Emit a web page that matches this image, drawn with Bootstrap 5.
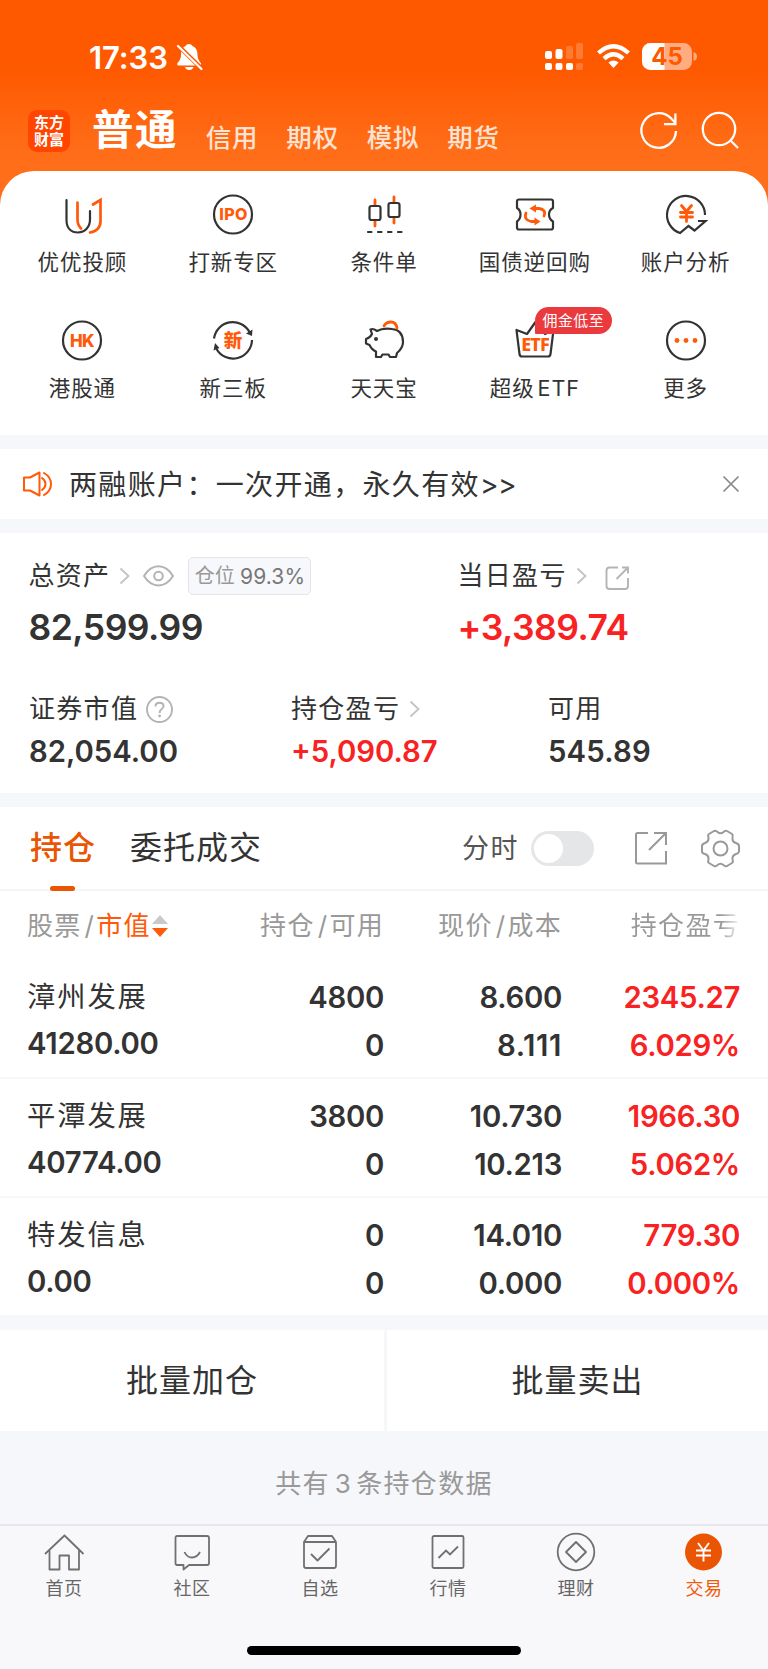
<!DOCTYPE html>
<html lang="zh-CN">
<head>
<meta charset="utf-8">
<meta name="viewport" content="width=device-width, initial-scale=1">
<title>交易</title>
<link rel="stylesheet" href="https://cdn.jsdelivr.net/npm/bootstrap@5.3.0/dist/css/bootstrap.min.css">
<style>
body{font-family:Inter,"Noto Sans CJK SC",sans-serif;color:#333;background:#f6f7fa;line-height:1;overflow-x:hidden}
svg{display:block;flex:none;overflow:visible}
.app{width:768px;height:1669px;white-space:nowrap}
.top-area{height:205px;background:linear-gradient(#ff5900 0,#ff5900 70px,#ff6d18 150px,#ff6f1b 205px);color:#fff}
.status{height:74px;padding:41px 71px 0 89px}
.clock{font-size:31px;font-weight:600;line-height:33px;letter-spacing:-.1px}
.accounts{height:97px;padding:0 29px 0 28px}
.logo{width:42px;height:42px;border-radius:9px;background:#ff4500;font:700 15px/17px Inter,"Noto Sans CJK SC",sans-serif;padding-top:4px;text-align:center;margin-top:36px}
.acc-main{font-size:41.5px;font-weight:700;letter-spacing:1.4px;line-height:42px;margin:35px 0 0 22px}
.acc{font-size:25.5px;font-weight:500;letter-spacing:.7px;line-height:30px;width:80.5px;margin-top:49px;color:#ffe2d2}
.panel{margin-top:-34px;height:264px;border-radius:34px 34px 0 0;padding:23px 7px 0;background:#fff}
.tool{height:126px;width:20%;font-size:21.5px;letter-spacing:.9px}
.tool span.cap{line-height:28px;margin-top:14px}
.etf-tip{left:20px;top:-13px;width:77px;height:27px;border-radius:14px 14px 14px 1px;background:#eb3a3e;color:#fff;font-size:15px;letter-spacing:.4px;line-height:27px;text-align:center}
.gapbar{height:14px}
.notice{height:70px;font-size:28px;letter-spacing:1.35px;padding:0 28px 0 22px}
.assets{height:260px}
.lbl{font-size:26px;letter-spacing:1.3px;height:38px}
.big{font-size:35.5px;font-weight:600;line-height:40px;letter-spacing:-.5px;margin-top:13px}
.num{font-size:29.3px;font-weight:600;line-height:32px}
.pos{border:1px solid #e3e4e8;border-radius:5px;background:#f7f8fb;width:123px;height:38px;font-size:20px;color:#999;letter-spacing:.2px}
.pos b{font-weight:400;color:#777;font-size:21px;letter-spacing:.1px}
.red{color:#f82222}
.tabs-row{height:84px;border-bottom:2px solid #f5f6f8;font-size:32px;letter-spacing:1px;padding:0 28px 0 30px}
.tab-on{color:#ea5504;font-weight:500}
.tab-on i{left:20px;bottom:-27px;width:25px;height:5px;border-radius:2.5px;background:#ea5504}
.switch-x{width:63px;height:35px;border-radius:18px;background:#e5e6e8;padding:3px}
.switch-x i{width:29px;height:29px;border-radius:50%;background:#fff}
.cols{display:grid;grid-template-columns:207px 177px 178px 178px}
.cols>:first-child{padding-left:27px}
.cols>*{text-align:right}.cols>:first-child{text-align:left}
.thead-x{height:69px;font-size:26px;letter-spacing:1.3px;color:#999;line-height:69px}
.sl{margin:0 1px 0 3px}
.fade-x{background:linear-gradient(90deg,#999 82%,#fff 102%);-webkit-background-clip:text;background-clip:text;color:transparent}
.hold{height:119px;border-bottom:2px solid #f6f7f9;padding-top:18px}
.hold.last{border:0;height:117px}
.stock{font-size:28.3px;letter-spacing:1.9px;line-height:38px}
.hold .num{line-height:40px;letter-spacing:-.3px}.hold .n2{margin-top:8px}
.hold>:first-child .n2{letter-spacing:-.25px}
.batch{height:101px;font-size:32px;letter-spacing:1px}
.batch>div+div{border-left:3px solid #f6f7f9}
.total{height:93px;font-size:26px;letter-spacing:1.3px;color:#999;padding-top:12px}
.bottom{height:145px;background:#f8f8fb;border-top:2px solid #e7e7ed;padding-top:7px}
.bottom .item{width:128px;font-size:18px;letter-spacing:.6px;color:#666}
.bottom .item span{line-height:24px;margin-top:4px}
.homebar{width:274px;height:9px;border-radius:5px;background:#000;margin-top:45px}
</style>
</head>
<body>
<div class="app d-flex flex-column">
  <header class="top-area flex-shrink-0">
    <div class="status d-flex align-items-start">
      <span class="clock">17:33</span>
      <svg class="ms-2" width="27" height="30" viewBox="0 0 27 30" style="margin-top:1px"><path fill="#fff" d="M2.500 23.500Q.500 23 1.500 21Q5 17.500 5 13Q5 5.500 9.500 4Q10.500 2 13 2T16.500 4Q21.500 6 21.500 13Q21.500 17.500 25 21.500Q25.500 23.500 24 23.500ZM9 25H17.500Q16.500 28 13.200 28T9 25Z"/><path stroke="#ff5900" stroke-width="4.500" d="M1 2.500L26 27"/><path stroke="#fff" stroke-width="2.200" stroke-linecap="round" d="M2 4L25.500 27"/></svg>
      <div class="ms-auto d-flex align-items-center" style="padding-top:2px">
        <svg width="39" height="27" viewBox="0 0 39 27" fill="#fff"><rect y="8" width="7" height="8" rx="2"/><rect x="10.500" y="6" width="7" height="10" rx="2"/><rect y="20" width="7" height="7" rx="2"/><rect x="10.500" y="20" width="7" height="7" rx="2"/><rect x="21" y="20" width="7" height="7" rx="2"/><g opacity=".2"><rect x="21" y="3" width="7" height="13" rx="2"/><rect x="31" width="7" height="16" rx="2"/><rect x="31" y="20" width="7" height="7" rx="2"/></g></svg>
        <svg style="margin-left:13px" width="33" height="25" viewBox="0 0 33 25" fill="none" stroke="#fff" stroke-width="4.300"><path d="M1.500 9Q16.500-4.500 31.500 9"/><path d="M7 14.600Q16.500 6 26 14.600"/><path d="M11.400 18.600Q16.500 14.200 21.600 18.600L16.500 24Z" fill="#fff" stroke="none"/></svg>
        <svg style="margin-left:12px" width="55" height="27" viewBox="0 0 55 27"><rect width="50" height="27" rx="8.500" fill="#ffac80"/><path fill="#fff" d="M8.500 0H22.500V27H8.500A8.500 8.500 0 0 1 0 18.500V8.500A8.500 8.500 0 0 1 8.500 0Z"/><path fill="#ffac80" d="M51.500 9Q55 10 55 13.500T51.500 18Z"/><text x="25" y="22" font-size="24" font-weight="700" fill="#ff5900" text-anchor="middle">45</text></svg>
      </div>
    </div>
    <div class="accounts d-flex">
      <div class="logo">东方<br>财富</div>
      <span class="acc-main">普通</span>
      <span class="acc" style="margin-left:28px">信用</span><span class="acc">期权</span><span class="acc">模拟</span><span class="acc">期货</span>
      <svg class="ms-auto" style="margin-top:37px" width="38" height="38" viewBox="0 0 38 38" fill="none" stroke="#fff" stroke-width="2.300"><path d="M36 20A17.300 17.300 0 1 1 31 7.300L35 11.500M35.400 2.500V13.200H24"/></svg>
      <svg style="margin:37px 0 0 23px" width="38" height="38" viewBox="0 0 38 38" fill="none" stroke="#fff" stroke-width="2.300"><circle cx="18" cy="18" r="16.200"/><path d="M29 29L37 37"/></svg>
    </div>
  </header>
  <section class="panel d-flex flex-wrap align-content-start flex-shrink-0 position-relative">
    <div class="tool d-flex flex-column align-items-center">
      <svg width="40" height="40" viewBox="0 0 40 40" fill="none" stroke-width="2.200" stroke-linecap="round"><path stroke="#333" d="M4.500 6V26C4.500 34 9 38.500 16 38.500S28 33 28 25.500V17"/><path stroke="#ff5a0a" stroke-width="2.700" d="M15.500 8.500V25Q15.500 31 19 34.500M31 10.500L38.500 6V27Q38.500 36.500 28 38.500"/></svg><span class="cap">优优投顾</span></div>
    <div class="tool d-flex flex-column align-items-center">
      <svg width="40" height="40" viewBox="0 0 40 40"><circle cx="20" cy="20.500" r="19" fill="none" stroke="#333" stroke-width="2.200"/><text x="20.500" y="26" text-anchor="middle" font-size="16" font-weight="800" letter-spacing=".3" fill="#ff5a0a">IPO</text></svg><span class="cap">打新专区</span></div>
    <div class="tool d-flex flex-column align-items-center">
      <svg width="40" height="40" viewBox="0 0 40 40" fill="none" stroke-width="2.200" stroke-linecap="round"><path stroke="#ff5a0a" stroke-width="2.800" d="M11 6V11M11 27V32M30 3V8M30 24V29"/><rect x="5.500" y="12" width="11" height="14" rx="2" stroke="#333"/><rect x="24.500" y="9" width="11" height="14" rx="2" stroke="#333"/><path stroke="#333" d="M4 38H7.500M14 38H17.500M24 38H27.500M34 38H37.500"/></svg><span class="cap">条件单</span></div>
    <div class="tool d-flex flex-column align-items-center">
      <svg width="40" height="40" viewBox="0 0 40 40" fill="none" stroke="#333" stroke-width="2.200" stroke-linejoin="round"><path d="M4 5.500H36Q38 5.500 38 7.500V14Q34 16 34 20.500T38 27.500V33.500Q38 35.500 36 35.500H4Q2 35.500 2 33.500V27.500Q5.500 25 5.500 20.500T2 14V7.500Q2 5.500 4 5.500Z"/><g stroke="#ff5a0a" stroke-width="2.800" stroke-linecap="round"><path d="M11 19Q8.500 26 16 27.500H21M29 22Q31.500 15.500 24 14.500H18"/></g><path fill="#ff5a0a" stroke="none" d="M14.500 14.500L21 10.500V18.500ZM25.500 27.500L19.500 23.500V31.500Z"/></svg><span class="cap">国债逆回购</span></div>
    <div class="tool d-flex flex-column align-items-center">
      <svg width="40" height="40" viewBox="0 0 40 40" fill="none" stroke="#333" stroke-width="2.200"><path d="M39 21A19 19 0 1 0 14 39L22.500 32L28.500 36.500L39.500 27H32"/><path stroke="#ff5a0a" stroke-width="2.800" stroke-linecap="round" d="M15.500 11.500L20.500 17.500L25.500 11.500M14.500 18.500H26.500M14.500 23H26.500M20.500 18V27.500"/></svg><span class="cap">账户分析</span></div>
    <div class="tool d-flex flex-column align-items-center">
      <svg width="40" height="40" viewBox="0 0 40 40"><circle cx="20" cy="20.500" r="19" fill="none" stroke="#333" stroke-width="2.200"/><text x="20" y="26.500" text-anchor="middle" font-size="17" font-weight="800" fill="#ff5a0a" letter-spacing="-.6">HK</text></svg><span class="cap">港股通</span></div>
    <div class="tool d-flex flex-column align-items-center">
      <svg width="40" height="40" viewBox="0 0 40 40" fill="none" stroke="#333" stroke-width="2.200"><path d="M1 18.500A19 19 0 0 1 36.500 12M39 20A19 19 0 0 1 3.500 29"/><path fill="#333" stroke="none" d="M33 13.500L39.500 9.500L39 16ZM.500 30.500L2 23L6.500 28Z"/><text x="20" y="27" text-anchor="middle" font-size="18.500" font-weight="900" fill="#ff5a0a" stroke="none" letter-spacing="0">新</text></svg><span class="cap">新三板</span></div>
    <div class="tool d-flex flex-column align-items-center">
      <svg width="40" height="40" viewBox="0 0 40 40" fill="none" stroke="#333" stroke-width="2.200" stroke-linejoin="round"><path d="M13 11Q9 8 6.500 9.500L8 14Q6 18 2 19V23.500L5.500 25Q8 30 12 31.500V37H17L18.500 34.500H24.500L26 37H32L33 33Q39 28 39 22Q39 10 28 9Q19 7.500 13 11Z"/><circle cx="12" cy="19" r="2" fill="#333" stroke="none"/><path stroke="#ff5a0a" stroke-width="2.800" stroke-linecap="round" d="M20 6Q22 2 27 2T33 8"/></svg><span class="cap">天天宝</span></div>
    <div class="tool d-flex flex-column align-items-center">
      <div class="position-relative"><svg width="40" height="40" viewBox="0 0 40 40" fill="none" stroke="#333" stroke-width="2.200" stroke-linejoin="round"><path d="M1.500 10L4.500 34Q4.800 36.500 7 36.500H33Q35.200 36.500 35.500 34L38.500 10L30 14L20.500 2L12 14Z"/><text x="20" y="30.500" text-anchor="middle" font-size="18" font-weight="800" fill="#ff5a0a" stroke="none" font-family="Noto Sans" letter-spacing="-.9">ETF</text></svg><span class="etf-tip position-absolute">佣金低至</span></div><span class="cap">超级<span style="margin-left:3px">ETF</span></span></div>
    <div class="tool d-flex flex-column align-items-center">
      <svg width="40" height="40" viewBox="0 0 40 40"><circle cx="20" cy="20.500" r="19" fill="none" stroke="#333" stroke-width="2.200"/><g fill="#ff5a0a"><circle cx="11" cy="20.500" r="2.400"/><circle cx="20" cy="20.500" r="2.400"/><circle cx="29" cy="20.500" r="2.400"/></g></svg><span class="cap">更多</span></div>
  </section>
  <div class="gapbar flex-shrink-0"></div>
  <div class="notice bg-white d-flex align-items-center flex-shrink-0">
    <svg width="31" height="28" viewBox="0 0 31 28" fill="none" stroke="#ff5a0a" stroke-width="2" stroke-linejoin="round"><path d="M2 7.500H8L17.500 2.500V25.500L8 20.500H2Z"/><path stroke-linecap="round" d="M20 8Q23.500 10.500 23.500 14T20 20M22 3Q29 7 29 14T22 25"/></svg>
    <span style="margin-left:16px;line-height:36px;padding-top:2px">两融账户：一次开通，永久有效<span style="letter-spacing:-.5px">&gt;&gt;</span></span>
    <svg class="ms-auto" width="18" height="18" viewBox="0 0 18 18" stroke="#888" stroke-width="1.700"><path d="M1.500 1.500L16.500 16.500M16.500 1.500L1.500 16.500"/></svg>
  </div>
  <div class="gapbar flex-shrink-0"></div>
  <section class="assets bg-white flex-shrink-0">
    <div class="d-flex" style="padding:24px 0 0 28.500px">
      <div style="width:429px">
        <div class="lbl d-flex align-items-center">总资产
          <svg style="margin-left:9px" width="12" height="18" viewBox="0 0 12 18" fill="none" stroke="#c4c4c6" stroke-width="1.900"><path d="M1.500 1.500L9.500 9L1.500 16.500"/></svg>
          <svg style="margin-left:12px" width="31" height="22" viewBox="0 0 31 22" fill="none" stroke="#b3b4b6" stroke-width="2"><path d="M1 11Q7 1.300 15.500 1.300T30 11Q24 20.500 15.500 20.500T1 11Z"/><circle cx="15.500" cy="11" r="4.300"/></svg>
          <span class="pos d-flex align-items-center justify-content-center" style="margin-left:14px;gap:5px">仓位<b>99.3%</b></span></div>
        <div class="big">82,599.99</div>
      </div>
      <div>
        <div class="lbl d-flex align-items-center">当日盈亏
          <svg style="margin-left:9px" width="12" height="18" viewBox="0 0 12 18" fill="none" stroke="#c4c4c6" stroke-width="1.900"><path d="M1.500 1.500L9.500 9L1.500 16.500"/></svg>
          <svg style="margin-left:17px;margin-top:3px" width="24" height="24" viewBox="0 0 24 24" fill="none" stroke="#b3b4b6" stroke-width="1.900"><path d="M13 1.500H4.500Q1.500 1.500 1.500 4.500V20Q1.500 23 4.500 23H20Q23 23 23 20V12M17 1.500H23V7.500M23 1.500L11.500 13"/></svg></div>
        <div class="big red">+3,389.74</div>
      </div>
    </div>
    <div class="d-flex" style="padding:42px 0 0 29px">
      <div style="width:262px"><div class="lbl d-flex align-items-center">证券市值<svg style="margin-left:8px" width="27" height="27" viewBox="0 0 27 27"><circle cx="13.500" cy="13.500" r="12.500" fill="none" stroke="#b3b4b6" stroke-width="1.900"/><path d="M9.500 10.500Q9.500 6.800 13.500 6.800T17.500 10.200Q17.500 12 15.500 13.300T13.600 17" fill="none" stroke="#b3b4b6" stroke-width="1.900"/><circle cx="13.600" cy="20" r="1.400" fill="#b3b4b6"/></svg></div><div class="num" style="margin-top:8px">82,054.00</div></div>
      <div style="width:257px"><div class="lbl d-flex align-items-center">持仓盈亏<svg style="margin-left:9px" width="12" height="18" viewBox="0 0 12 18" fill="none" stroke="#c4c4c6" stroke-width="1.900"><path d="M1.500 1.500L9.500 9L1.500 16.500"/></svg></div><div class="num red" style="margin-top:8px">+5,090.87</div></div>
      <div><div class="lbl d-flex align-items-center">可用</div><div class="num" style="margin-top:8px;letter-spacing:.2px">545.89</div></div>
    </div>
  </section>
  <div class="gapbar flex-shrink-0"></div>
  <section class="bg-white flex-shrink-0">
    <div class="tabs-row d-flex align-items-center">
      <span class="tab-on position-relative">持仓<i class="position-absolute"></i></span>
      <span style="margin-left:34px">委托成交</span>
      <span class="ms-auto" style="font-size:27px;letter-spacing:1.500px;color:#555">分时</span>
      <span class="switch-x" style="margin-left:12px"><i class="d-block"></i></span>
      <svg style="margin-left:40px" width="34" height="34" viewBox="0 0 34 34" fill="none" stroke="#999" stroke-width="2"><path d="M14 2H3.500Q2 2 2 3.500V31Q2 32.500 3.500 32.500H32V20M20 2H32V14M32 2L15 19"/></svg>
      <svg style="margin-left:33px" width="39" height="39" viewBox="0 0 39 39" fill="none" stroke="#999" stroke-width="2" stroke-linejoin="round"><path d="M13 2Q15 1 16.500 3Q19.500 5.500 22.500 3Q24.500 1 26 2L31 5Q32.500 6.500 31.500 8.500Q31 13 35 14Q38 15 38 17V22.500Q37.500 24.500 35 25Q31 26.500 31.500 30.500Q32.500 33 31 34L26 37Q24 38 22.500 36Q19.500 33.500 16.500 36Q15 38 13 37L8 34Q6.500 33 7.500 30.500Q8 26.500 4 25Q1 24.500 1 22.500V17Q1 15 4 14Q8 12.500 7.500 8.500Q6.500 6 8 5Z"/><circle cx="19.500" cy="19.500" r="7"/></svg>
    </div>
    <div class="thead-x cols">
      <div class="d-flex align-items-center"><span>股票</span><span class="sl">/</span><span style="color:#ff5a0a">市值</span><svg style="margin-left:1px" width="16" height="22" viewBox="0 0 16 22"><path fill="#c9c9c9" d="M8 0L16 9H0Z"/><path fill="#ff5a0a" d="M8 22L16 13H0Z"/></svg></div>
      <div>持仓<span class="sl">/</span>可用</div>
      <div>现价<span class="sl">/</span>成本</div>
      <div><span class="fade-x">持仓盈亏</span></div>
    </div>
    <div class="hold cols"><div><div class="stock">漳州发展</div><div class="num n2">41280.00</div></div><div><div class="num">4800</div><div class="num n2">0</div></div><div><div class="num">8.600</div><div class="num n2" style="letter-spacing:.6px">8.111</div></div><div class="red"><div class="num">2345.27</div><div class="num n2">6.029%</div></div></div>
    <div class="hold cols"><div><div class="stock">平潭发展</div><div class="num n2">40774.00</div></div><div><div class="num">3800</div><div class="num n2">0</div></div><div><div class="num">10.730</div><div class="num n2">10.213</div></div><div class="red"><div class="num">1966.30</div><div class="num n2">5.062%</div></div></div>
    <div class="hold last cols"><div><div class="stock">特发信息</div><div class="num n2">0.00</div></div><div><div class="num">0</div><div class="num n2">0</div></div><div><div class="num">14.010</div><div class="num n2">0.000</div></div><div class="red"><div class="num">779.30</div><div class="num n2">0.000%</div></div></div>
  </section>
  <div class="flex-shrink-0" style="height:15px"></div>
  <div class="batch bg-white d-flex flex-shrink-0"><div class="w-50 d-flex align-items-center justify-content-center">批量加仓</div><div class="w-50 d-flex align-items-center justify-content-center">批量卖出</div></div>
  <div class="total d-flex align-items-center justify-content-center flex-shrink-0">共有<span style="margin:0 4px 0 5px">3</span>条持仓数据</div>
  <nav class="bottom d-flex flex-column align-items-center flex-shrink-0">
    <div class="d-flex">
      <div class="item d-flex flex-column align-items-center"><svg width="40" height="40" viewBox="0 0 40 40" fill="none" stroke="#707070" stroke-width="1.800" stroke-linejoin="round"><path d="M1 21L20.500 2.500L39.500 21M5.500 17V36.500H15.500V22.500H25V36.500H35V17"/></svg><span>首页</span></div>
      <div class="item d-flex flex-column align-items-center"><svg width="40" height="40" viewBox="0 0 40 40" fill="none" stroke="#707070" stroke-width="1.800" stroke-linejoin="round"><path d="M5 3H35Q37 3 37 5V30Q37 32 35 32H17L11.500 36.500V32H5Q3.500 32 3.500 30V5Q3.500 3 5 3ZM12.500 19Q15 24.500 20 24.500T28 19"/></svg><span>社区</span></div>
      <div class="item d-flex flex-column align-items-center"><svg width="40" height="40" viewBox="0 0 40 40" fill="none" stroke="#707070" stroke-width="1.800" stroke-linejoin="round"><path d="M4 9L8 3H32L36 9M4 9H36V32.500Q36 35 34 35H6Q4 35 4 33ZM11 21L17.500 27.500L29.500 15.500"/></svg><span>自选</span></div>
      <div class="item d-flex flex-column align-items-center"><svg width="40" height="40" viewBox="0 0 40 40" fill="none" stroke="#707070" stroke-width="1.800"><rect x="4.500" y="3" width="31" height="32" rx="1.500"/><path d="M10.500 25L18 17.500L22 21.500L30 13.500"/></svg><span>行情</span></div>
      <div class="item d-flex flex-column align-items-center"><svg width="40" height="40" viewBox="0 0 40 40" fill="none" stroke="#707070" stroke-width="1.800" stroke-linejoin="round"><circle cx="20" cy="19" r="18.300"/><path d="M20 9L30 19L20 29L10 19Z"/></svg><span>理财</span></div>
      <div class="item d-flex flex-column align-items-center" style="color:#f25a08"><svg width="40" height="40" viewBox="0 0 40 40" fill="none" stroke="#fff" stroke-width="1.900"><circle cx="19.500" cy="19" r="18.500" fill="#ea5504" stroke="none"/><path d="M14 10L19.500 17.500L25 10M12 17.500H27M12 22.500H27M19.500 17V28.500"/></svg><span>交易</span></div>
    </div>
    <div class="homebar"></div>
  </nav>
</div>
<script src="https://cdn.jsdelivr.net/npm/bootstrap@5.3.0/dist/js/bootstrap.bundle.min.js"></script>
</body>
</html>
